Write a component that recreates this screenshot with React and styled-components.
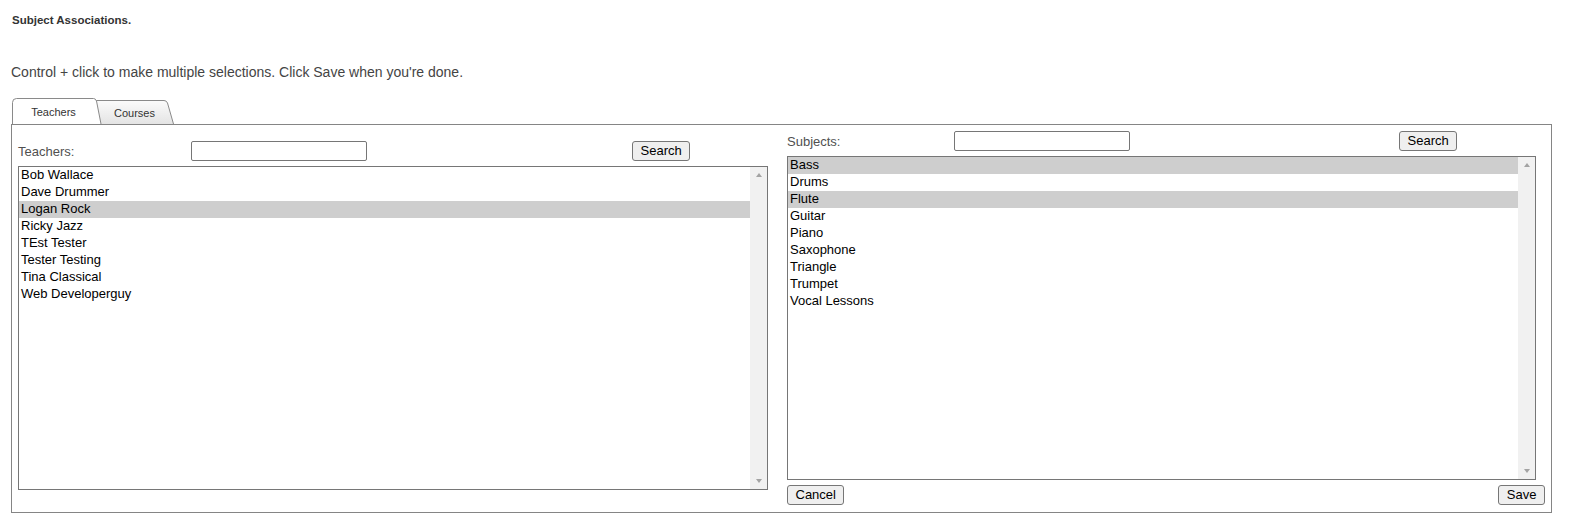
import React, { useState } from 'react';
import styled, { createGlobalStyle } from 'styled-components';

const TEACHERS = [
  'Bob Wallace',
  'Dave Drummer',
  'Logan Rock',
  'Ricky Jazz',
  'TEst Tester',
  'Tester Testing',
  'Tina Classical',
  'Web Developerguy',
];

const SUBJECTS = [
  'Bass',
  'Drums',
  'Flute',
  'Guitar',
  'Piano',
  'Saxophone',
  'Triangle',
  'Trumpet',
  'Vocal Lessons',
];

function TabShape({ id, path, active }) {
  return (
    <Shape preserveAspectRatio="none">
      <defs>
        <linearGradient id={id} x1="0" y1="0" x2="0" y2="1">
          <stop offset="0" stopColor="#fbfbfb" />
          <stop offset="1" stopColor="#e4e4e4" />
        </linearGradient>
      </defs>
      <path
        d={path}
        fill={active ? '#fff' : `url(#${id})`}
        stroke="#8a8a8a"
        strokeWidth="1"
      />
    </Shape>
  );
}

function SelectList({ items, selected, onToggle, width }) {
  return (
    <ListBox $w={width}>
      <Options>
        {items.map(item => (
          <Option
            key={item}
            $selected={selected.includes(item)}
            onClick={() => onToggle(item)}
          >
            {item}
          </Option>
        ))}
      </Options>
      <Scrollbar>
        <Arrow />
        <Arrow $down />
      </Scrollbar>
    </ListBox>
  );
}

export default function App() {
  const [teachers, setTeachers] = useState(['Logan Rock']);
  const [subjects, setSubjects] = useState(['Bass', 'Flute']);
  const [teacherQuery, setTeacherQuery] = useState('');
  const [subjectQuery, setSubjectQuery] = useState('');

  const toggle = setter => item =>
    setter(prev =>
      prev.includes(item) ? prev.filter(i => i !== item) : [...prev, item]
    );

  return (
    <>
      <GlobalStyle />
      <Page>
        <Title>Subject Associations.</Title>
        <Hint>Control + click to make multiple selections. Click Save when you're done.</Hint>

        <TabStrip>
          <Tab $w={89} $h={26} $active>
            <TabShape
              id="tab-teachers"
              active
              path="M0.5 26 V4.5 Q0.5 0.5 4.5 0.5 H81.5 Q83.5 0.5 84.5 3 L89 26"
            />
            <TabLabel $pl={0} $pr={6}>Teachers</TabLabel>
          </Tab>
          <Tab $w={81} $h={24} $offset={-8}>
            <TabShape
              id="tab-courses"
              path="M0.5 24 V4 Q0.5 0.5 4 0.5 H71 Q73.5 0.5 74.5 3 L80.5 24"
            />
            <TabLabel $pl={8} $pr={6}>Courses</TabLabel>
          </Tab>
        </TabStrip>

        <Panel>
          <Column $w="750px" $top={10}>
            <FieldRow $cols="173px 441px 58px">
              <Label>Teachers:</Label>
              <TextInput
                value={teacherQuery}
                onChange={e => setTeacherQuery(e.target.value)}
              />
              <Button>Search</Button>
            </FieldRow>
            <SelectList
              items={TEACHERS}
              selected={teachers}
              onToggle={toggle(setTeachers)}
              width="750px"
            />
          </Column>

          <Column $w="auto" $grow>
            <FieldRow $cols="167px 445px 58px">
              <Label>Subjects:</Label>
              <TextInput
                value={subjectQuery}
                onChange={e => setSubjectQuery(e.target.value)}
              />
              <Button>Search</Button>
            </FieldRow>
            <SelectList
              items={SUBJECTS}
              selected={subjects}
              onToggle={toggle(setSubjects)}
              width="749px"
            />
            <ButtonRow>
              <Button>Cancel</Button>
              <Button>Save</Button>
            </ButtonRow>
          </Column>
        </Panel>
      </Page>
    </>
  );
}

const GlobalStyle = createGlobalStyle`
  html, body {
    margin: 0;
    background: #fff;
  }
  body {
    font-family: "Liberation Sans", Arial, sans-serif;
  }
  * {
    box-sizing: border-box;
  }
`;

const Page = styled.div`
  padding: 13px 0 0 11px;
  width: 1552px;
`;

const Title = styled.div`
  margin-left: 1px;
  font-size: 11.5px;
  line-height: 14px;
  font-weight: bold;
  color: #333;
`;

const Hint = styled.div`
  margin-top: 37px;
  font-size: 14px;
  line-height: 16px;
  color: #444;
`;

const TabStrip = styled.div`
  display: flex;
  align-items: flex-end;
  height: 26px;
  margin-top: 18px;
  padding-left: 1px;
`;

const Tab = styled.div`
  position: relative;
  display: flex;
  align-items: center;
  width: ${({ $w }) => $w}px;
  height: ${({ $h }) => $h}px;
  margin-left: ${({ $offset }) => $offset || 0}px;
  padding-top: 1px;
  z-index: ${({ $active }) => ($active ? 2 : 1)};
  cursor: pointer;
`;

const Shape = styled.svg`
  position: absolute;
  inset: 0;
  width: 100%;
  height: 100%;
  overflow: visible;
`;

const TabLabel = styled.span`
  position: relative;
  flex: 1;
  padding: 0 ${({ $pr }) => $pr}px 0 ${({ $pl }) => $pl}px;
  text-align: center;
  font-size: 11px;
  color: #333;
`;

const Panel = styled.div`
  display: flex;
  align-items: flex-start;
  gap: 19px;
  width: 1541px;
  padding: 6px 6px 7px;
  border: 1px solid #858585;
`;

const Column = styled.div`
  display: flex;
  flex-direction: column;
  gap: 5px;
  width: ${({ $w }) => $w};
  flex: ${({ $grow }) => ($grow ? 1 : 'none')};
  margin-top: ${({ $top }) => $top || 0}px;
`;

const FieldRow = styled.div`
  display: grid;
  grid-template-columns: ${({ $cols }) => $cols};
  align-items: center;
  height: 20px;
`;

const Label = styled.span`
  font-size: 13px;
  color: #505050;
`;

const TextInput = styled.input`
  width: 176px;
  height: 20px;
  padding: 1px 2px;
  border: 1px solid #767676;
  border-radius: 2px;
  font-family: inherit;
  font-size: 13px;
  outline: none;
`;

const Button = styled.button`
  justify-self: start;
  height: 20px;
  padding: 0 7.5px;
  border: 1px solid #767676;
  border-radius: 3px;
  background: #efefef;
  font-family: "Liberation Sans", Arial, sans-serif;
  font-size: 13px;
  line-height: 18px;
  color: #000;
  cursor: pointer;
`;

const ButtonRow = styled.div`
  display: flex;
  justify-content: space-between;
`;

const ListBox = styled.div`
  display: flex;
  width: ${({ $w }) => $w};
  height: 324px;
  border: 1px solid #767676;
  background: #fff;
`;

const Options = styled.div`
  flex: 1;
`;

const Option = styled.div`
  height: 17px;
  padding-left: 2px;
  font-size: 13px;
  line-height: 15px;
  color: #000;
  white-space: nowrap;
  background: ${({ $selected }) => ($selected ? '#cecece' : 'transparent')};
  cursor: default;
`;

const Scrollbar = styled.div`
  display: flex;
  flex-direction: column;
  justify-content: space-between;
  align-items: center;
  width: 17px;
  padding: 6px 0;
  background: #f1f1f1;
`;

const Arrow = styled.span`
  width: 0;
  height: 0;
  border-left: 3.5px solid transparent;
  border-right: 3.5px solid transparent;
  ${({ $down }) =>
    $down ? 'border-top: 4px solid #a3a3a3;' : 'border-bottom: 4px solid #a3a3a3;'}
`;
